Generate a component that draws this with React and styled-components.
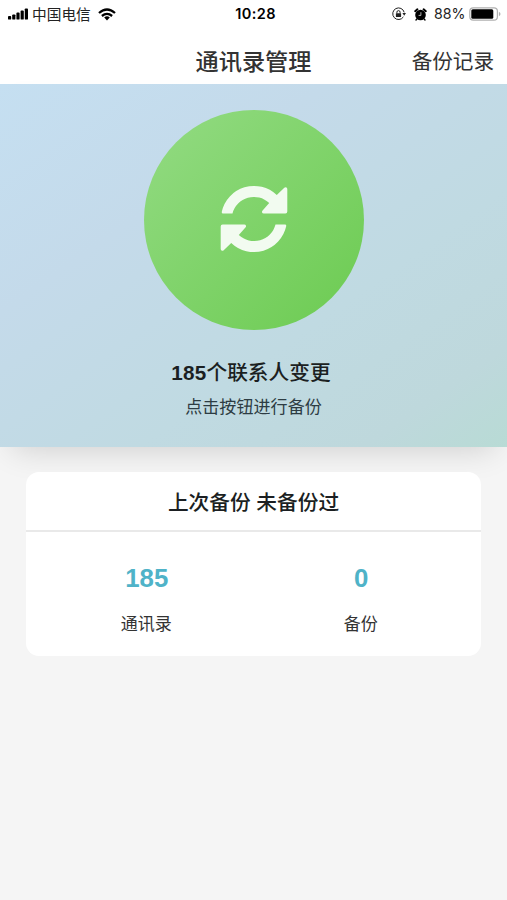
import React from "react"
import styled, { createGlobalStyle } from "styled-components"

const ink = "#1b1f22"
const teal = "#4fb3c8"
const page = "#f5f5f5"

const GlobalStyle = createGlobalStyle`
    body {
        margin: 0;
        background: ${page};
        color: ${ink};
        font-family: "Liberation Sans", "Noto Sans CJK SC", sans-serif;
    }
`

const SignalIcon = () => (
    <svg width="20" height="12" viewBox="0 0 20 12">
        <rect x="0" y="8" width="3.2" height="3.6" rx="0.9" />
        <rect x="4.2" y="6.4" width="3.2" height="5.2" rx="0.9" />
        <rect x="8.4" y="4.6" width="3.2" height="7" rx="0.9" />
        <rect x="12.6" y="2.5" width="3.2" height="9.1" rx="0.9" />
        <rect x="16.8" y="0.4" width="3.2" height="11.2" rx="0.9" />
    </svg>
)

const WifiIcon = () => (
    <svg width="18" height="13" viewBox="0 0 18 13" fill="none" stroke="#000" strokeWidth="2.3">
        <path d="M1 5Q9-2 17 5" />
        <path d="M3.9 8Q9 3.7 14.1 8" />
        <path d="M6.2 9.5Q9 7.2 11.8 9.5L9 12.6z" fill="#000" stroke="none" />
    </svg>
)

const LockIcon = () => (
    <svg width="14" height="14" viewBox="0 0 14 14" fill="none" stroke="#222" strokeWidth="1">
        <path d="M11.4 9.9A5.8 5.8 0 1 1 12.2 5.4" />
        <path d="M10.4 6.1H14L12.2 8.8z" fill="#222" stroke="none" />
        <rect x="3.9" y="6.2" width="5.2" height="3.9" rx="0.5" fill="#222" stroke="none" />
        <path d="M4.9 6.4V5.2a1.6 1.6 0 0 1 3.2 0v1.2" />
    </svg>
)

const AlarmIcon = () => (
    <svg width="13" height="13" viewBox="0 0 13 13">
        <circle cx="6.5" cy="7" r="5.3" />
        <path d="M1.2 3.2L3.4 1.3M11.8 3.2L9.6 1.3" fill="none" stroke="#000" strokeWidth="2" strokeLinecap="round" />
        <path d="M2.9 11L2 12M10.1 11l.9 1" fill="none" stroke="#000" strokeWidth="1.4" strokeLinecap="round" />
        <path d="M6.9 4.2v3.2H4.6" fill="none" stroke="#ddd" strokeWidth="0.8" />
    </svg>
)

const BatteryIcon = () => (
    <svg width="32" height="14" viewBox="0 0 32 14">
        <rect x="0.8" y="0.8" width="27.6" height="12.4" rx="3.4" fill="#fff" stroke="#b0b0b0" strokeWidth="1.2" />
        <rect x="2.3" y="2.3" width="22" height="9.4" rx="1.5" />
        <path d="M29.9 4.7q1.6.7 1.6 2.3t-1.6 2.3z" fill="#b0b0b0" />
    </svg>
)

const SyncIcon = () => (
    <svg width="68" height="68" viewBox="0 0 68 68" fill="#f2fbf0">
        <path
            id="sync-half"
            d="M3 28.4Q1.5 28.4 1.8 26.7A33 33 0 0 1 56.8 10.1L64.3 2.7Q65.4 1.7 66.5 2.5Q67.3 3 67.3 4.2V26.5Q67.3 28.4 65.4 28.4H43.8Q42.3 28.4 42 27.2Q41.8 26.3 42.6 25.4L49.2 18A22.2 22.2 0 0 0 12.5 28.4z"
        />
        <use href="#sync-half" transform="rotate(180 34 34)" />
    </svg>
)

const Summary = ({ value, label }) => (
    <SummaryItem>
        <SummaryValue>{value}</SummaryValue>
        <SummaryLabel>{label}</SummaryLabel>
    </SummaryItem>
)

const App = () => (
    <>
        <GlobalStyle />
        <StatusBar>
            <StatusGroup>
                <SignalIcon />
                <Carrier>中国电信</Carrier>
                <WifiIcon />
            </StatusGroup>
            <Clock>10:28</Clock>
            <StatusGroup end>
                <LockIcon />
                <AlarmIcon />
                <Percent>88%</Percent>
                <BatteryIcon />
            </StatusGroup>
        </StatusBar>
        <Header>
            <Title>通讯录管理</Title>
            <HeaderLink>备份记录</HeaderLink>
        </Header>
        <Hero>
            <SyncButton aria-label="备份"><SyncIcon /></SyncButton>
            <Changes><b>185</b>个联系人变更</Changes>
            <Hint>点击按钮进行备份</Hint>
        </Hero>
        <Card>
            <CardTitle>上次备份 未备份过</CardTitle>
            <SummaryRow>
                <Summary value="185" label="通讯录" />
                <Summary value="0" label="备份" />
            </SummaryRow>
        </Card>
    </>
)

const StatusBar = styled.div`
    display: grid;
    grid-template-columns: 1fr auto 1fr;
    align-items: center;
    box-sizing: border-box;
    height: 28px;
    padding: 0 6px 0 8px;
    background: #fff;
    color: #000;
`

const StatusGroup = styled.div.withConfig({ shouldForwardProp: p => p !== "end" })`
    display: flex;
    align-items: center;
    justify-content: ${props => props.end ? "flex-end" : "flex-start"};
    gap: ${props => props.end ? "7.5px" : "4px"};
    height: 26px;
    svg { flex: none; }
    svg:last-child { margin-left: ${props => props.end ? "-4px" : "3px"}; }
`

const Carrier = styled.span`
    padding-top: 1px;
    font-size: 14.7px;
    line-height: 24px;
    color: #222;
`

const Clock = styled.span`
    padding-left: 2px;
    font: 600 14.5px/26px Inter, "Liberation Sans", sans-serif;
    letter-spacing: 0.4px;
`

const Percent = styled.span`
    font: 400 14.2px/26px Inter, "Liberation Sans", sans-serif;
    color: #222;
`

const Header = styled.header`
    display: grid;
    grid-template-columns: 1fr auto 1fr;
    align-items: center;
    box-sizing: border-box;
    height: 56px;
    padding: 0 13px;
    background: #fff;
    color: #333;
`

const Title = styled.h1`
    grid-column: 2;
    margin: 0;
    padding-top: 11px;
    font-size: 23.2px;
    line-height: 32px;
    font-weight: 500;
`

const HeaderLink = styled.a`
    justify-self: end;
    padding-top: 12px;
    font-size: 20.6px;
    line-height: 32px;
`

const Hero = styled.section`
    display: flex;
    flex-direction: column;
    align-items: center;
    box-sizing: border-box;
    height: 363px;
    padding-top: 26px;
    background: linear-gradient(145deg, #c5dff1 0%, #c4daea 32%, #c0dae2 64%, #bed8dc 86%, #b8dbd5 100%);
    box-shadow: 0 14px 30px -12px rgba(0, 0, 0, 0.16);
`

const SyncButton = styled.button`
    display: flex;
    justify-content: center;
    align-items: center;
    box-sizing: border-box;
    width: 220px;
    height: 220px;
    padding: 0 0 2px;
    border: 0;
    border-radius: 50%;
    background: linear-gradient(135deg, #93db83, #6ccb51);
`

const Changes = styled.p`
    margin: 28px 5px 0 0;
    font-size: 20.7px;
    line-height: 30px;
    font-weight: 500;
    b { font-weight: 700; letter-spacing: 0.2px; }
`

const Hint = styled.p`
    margin: 7px 0 0;
    font-size: 17.1px;
    line-height: 26px;
    color: #2d3c43;
`

const Card = styled.section`
    margin: 25px 26px 0;
    border-radius: 13px;
    background: #fff;
    position: relative;
    overflow: hidden;
`

const CardTitle = styled.h2`
    margin: 0;
    border-bottom: 2px solid #e9e9e9;
    font-size: 20.7px;
    line-height: 58px;
    padding-top: 2px;
    height: 56px;
    font-weight: 500;
    text-align: center;
`

const SummaryRow = styled.div`
    display: grid;
    grid-template-columns: 1fr 1fr;
    height: 124px;
    padding: 0 13px;
`

const SummaryItem = styled.div`
    display: flex;
    flex-direction: column;
    align-items: center;
    padding-top: 31px;
`

const SummaryValue = styled.strong`
    font-size: 25.8px;
    line-height: 30px;
    padding-left: 1px;
    color: ${teal};
`

const SummaryLabel = styled.span`
    margin-top: 19px;
    font-size: 17px;
    line-height: 26px;
    color: #333;
`

export default App
